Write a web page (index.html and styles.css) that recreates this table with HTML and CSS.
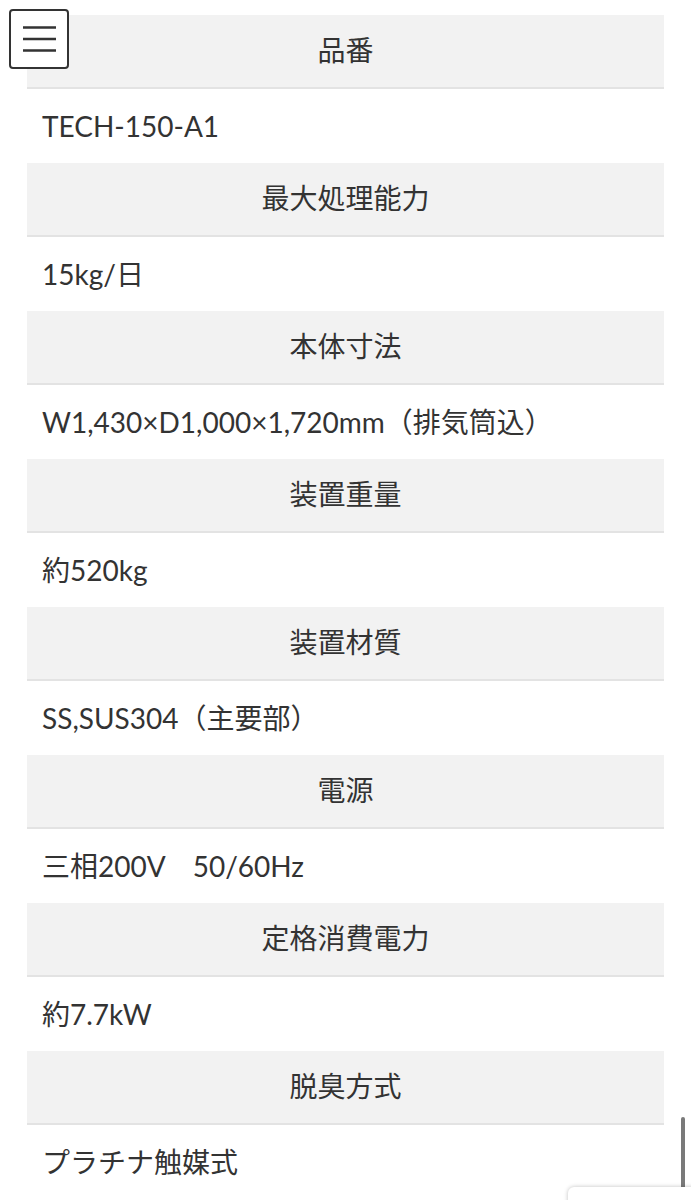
FILE: index.html
```html
<!DOCTYPE html>
<html lang="ja">
<head>
<meta charset="utf-8">
<link rel="stylesheet" href="styles.css">
</head>
<body>
<button class="menu" aria-label="menu">
  <svg width="35" height="28" viewBox="0 0 35 28"><path d="M1 2.5H34M1 14H34M1 25.5H34" stroke="#333" stroke-width="2.4" fill="none"/></svg>
</button>
<div class="spec">
  <div class="th">品番</div>
  <div class="td">TECH-150-A1</div>
  <div class="th">最大処理能力</div>
  <div class="td">15kg/日</div>
  <div class="th">本体寸法</div>
  <div class="td">W1,430×D1,000×1,720mm（排気筒込）</div>
  <div class="th">装置重量</div>
  <div class="td">約520kg</div>
  <div class="th">装置材質</div>
  <div class="td">SS,SUS304（主要部）</div>
  <div class="th">電源</div>
  <div class="td">三相200V　50/60Hz</div>
  <div class="th">定格消費電力</div>
  <div class="td">約7.7kW</div>
  <div class="th">脱臭方式</div>
  <div class="td">プラチナ触媒式</div>
</div>
<div class="scrollbar"></div>
<div class="corner-card"></div>
</body>
</html>
```
FILE: styles.css
```css
html, body {
  margin: 0;
  padding: 0;
  background: #fff;
  height: 1200px;
  overflow: hidden;
}
body {
  font-family: Lato, "Noto Sans CJK JP", sans-serif;
  color: #333;
  position: relative;
}
.spec {
  margin: 15px 27px 0 27px;
  display: flex;
  flex-direction: column;
}
.th {
  background: #f2f2f2;
  border-bottom: 2px solid #e3e3e3;
  height: 72px;
  display: flex;
  align-items: center;
  justify-content: center;
  font-size: 28px;
  line-height: 1;
  padding-bottom: 2px;
  box-sizing: border-box;
  height: 74px;
}
.td {
  height: 74px;
  display: flex;
  align-items: center;
  padding-left: 15px;
  font-size: 28px;
  line-height: 1;
  white-space: pre;
}
.menu {
  position: absolute;
  left: 9px;
  top: 9px;
  width: 60px;
  height: 60px;
  box-sizing: border-box;
  border: 2px solid #333;
  border-radius: 4px;
  background: #fff;
  padding: 0;
  display: flex;
  align-items: center;
  justify-content: center;
  z-index: 2;
}
.scrollbar {
  position: absolute;
  right: 6px;
  top: 1117px;
  width: 4px;
  height: 78px;
  border-radius: 2px;
  background: #7a7a7a;
}
.corner-card {
  position: absolute;
  left: 568px;
  top: 1187px;
  width: 140px;
  height: 40px;
  background: #fff;
  border-radius: 6px;
  box-shadow: 0 0 4px rgba(0,0,0,0.25);
}
```
